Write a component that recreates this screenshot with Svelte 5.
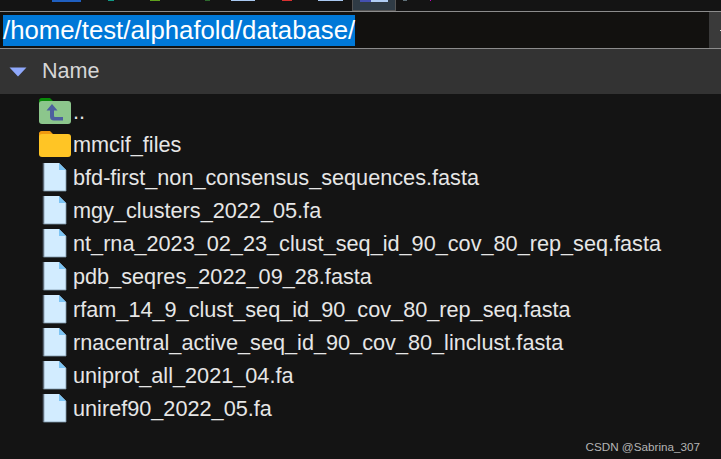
<script lang="ts">
	const files = [
		'bfd-first_non_consensus_sequences.fasta',
		'mgy_clusters_2022_05.fa',
		'nt_rna_2023_02_23_clust_seq_id_90_cov_80_rep_seq.fasta',
		'pdb_seqres_2022_09_28.fasta',
		'rfam_14_9_clust_seq_id_90_cov_80_rep_seq.fasta',
		'rnacentral_active_seq_id_90_cov_80_linclust.fasta',
		'uniprot_all_2021_04.fa',
		'uniref90_2022_05.fa'
	];
	// cut-off icons of the toolbar above: colour, gap before, width, height
	const toolsLeft = [
		{ color: '#1f5fc0', gap: 52, width: 29, height: 2 },
		{ color: '#0f9a86', gap: 27, width: 6, height: 1 },
		{ color: '#5fa01c', gap: 36, width: 10, height: 1 },
		{ color: '#2d6a2d', gap: 45, width: 5, height: 1 },
		{ color: '#a9c8f0', gap: 21, width: 24, height: 1 },
		{ color: '#d93030', gap: 27, width: 10, height: 1 },
		{ color: '#a9c8f0', gap: 26, width: 25, height: 1 }
	];
	const toolsRight = [
		{ color: '#5f7078', gap: 7, width: 4, height: 1 },
		{ color: '#c800c8', gap: 23, width: 1, height: 1 }
	];
</script>

<div class="window">
	<div class="toolbar">
		{#each toolsLeft as tool}
			<span
				class="tool"
				style="background: {tool.color}; margin-left: {tool.gap}px; width: {tool.width}px; height: {tool.height}px"
			></span>
		{/each}
		<span class="tool-active"><i></i><b></b></span>
		{#each toolsRight as tool}
			<span
				class="tool"
				style="background: {tool.color}; margin-left: {tool.gap}px; width: {tool.width}px; height: {tool.height}px"
			></span>
		{/each}
	</div>

	<div class="path-bar">
		<span class="path">/home/test/alphafold/database/</span>
		<span class="path-button"><i></i></span>
	</div>

	<div class="header">
		<svg width="18" height="10" viewBox="0 0 18 10"><path d="M0.500 0.500H17.500L9 9.500Z" fill="#8fa8fb" /></svg>
		<span>Name</span>
	</div>

	<ul class="list">
		<li>
			<svg class="icon" width="32" height="26" viewBox="0 0 32 26">
				<path d="M0 4a3 3 0 0 1 3-4h8l3 3v3h-14Z" fill="#0a8a0a" />
				<rect y="3" width="32" height="23" rx="3" fill="#8cc68c" />
				<path d="M13 6L7.500 12.500H11V18.500Q11 22.500 15 22.500H24V19H16Q15 19 15 18V12.500H18.500Z" fill="#4d5f9f" />
			</svg>
			<span class="name">..</span>
		</li>
		<li>
			<svg class="icon" width="32" height="26" viewBox="0 0 32 26">
				<path d="M0 4a3 3 0 0 1 3-4h8l3 3v3h-14Z" fill="#f09a10" />
				<rect y="3" width="32" height="23" rx="3" fill="#ffc525" />
			</svg>
			<span class="name">mmcif_files</span>
		</li>
		{#each files as file}
			<li>
				<svg class="icon" width="32" height="30" viewBox="0 0 32 30">
					<path d="M4.500 1H20L27 8V29H4.500Z" fill="#d2ecff" />
					<path d="M4.500 1V29" stroke="#5d6b78" stroke-width="1.500" fill="none" />
					<path d="M27 8V29H4.500" stroke="#7f97a8" stroke-width="0.800" fill="none" />
					<path d="M20 1L27 8H20Z" fill="#7cc4f4" />
				</svg>
				<span class="name">{file}</span>
			</li>
		{/each}
	</ul>

	<span class="watermark">CSDN @Sabrina_307</span>
</div>

<style>
	:global(body) {
		background: #141414;
		margin: 0;
	}

	.window {
		background: #141414;
		color: #e6e6e6;
		font-family: 'Liberation Sans', Arial, sans-serif;
		height: 459px;
		overflow: hidden;
		position: relative;
		width: 721px;
	}

	.toolbar {
		display: flex;
		height: 11px;
	}

	.tool {
		flex-shrink: 0;
	}

	.tool-active {
		background: #2f3b45;
		border: 1px solid #555;
		border-top: 0;
		box-sizing: border-box;
		display: flex;
		flex-shrink: 0;
		height: 11px;
		margin-left: 9px;
		padding: 0 7px;
		width: 44px;
	}

	.tool-active i {
		background: #4450b0;
		height: 2px;
		width: 12px;
	}

	.tool-active b {
		background: #b0cdf5;
		height: 2px;
		width: 20px;
	}

	.path-bar {
		background: #12110f;
		border-bottom: 1px solid #8c8c8c;
		border-top: 1px solid #8c8c8c;
		display: flex;
		height: 36px;
		padding-left: 3px;
	}

	.path {
		align-self: center;
		background: #0078d7;
		color: #fff;
		font-size: 25.75px;
		height: 31px;
		line-height: 31px;
	}

	.path-button {
		align-items: center;
		background: #3a3a3a;
		display: flex;
		height: 36px;
		justify-content: flex-end;
		margin-left: auto;
		width: 12px;
	}

	.path-button i {
		background: #e0e0e0;
		height: 1px;
		width: 1px;
	}

	.header {
		align-items: center;
		background: #333;
		color: #d6d6d6;
		display: flex;
		font-size: 21.6px;
		gap: 15px;
		height: 45px;
		padding-left: 9px;
	}

	.header span {
		position: relative;
		top: -1px;
	}

	.list {
		list-style: none;
		margin: 0;
		padding: 0;
	}

	.list li {
		align-items: center;
		display: flex;
		font-size: 21.68px;
		height: 33px;
	}

	.icon {
		flex-shrink: 0;
		margin-left: 39px;
	}

	.name {
		margin-left: 2px;
		padding-top: 2px;
	}

	.watermark {
		bottom: 6px;
		color: #b5b5b5;
		font-size: 11.7px;
		position: absolute;
		right: 21px;
	}
</style>
